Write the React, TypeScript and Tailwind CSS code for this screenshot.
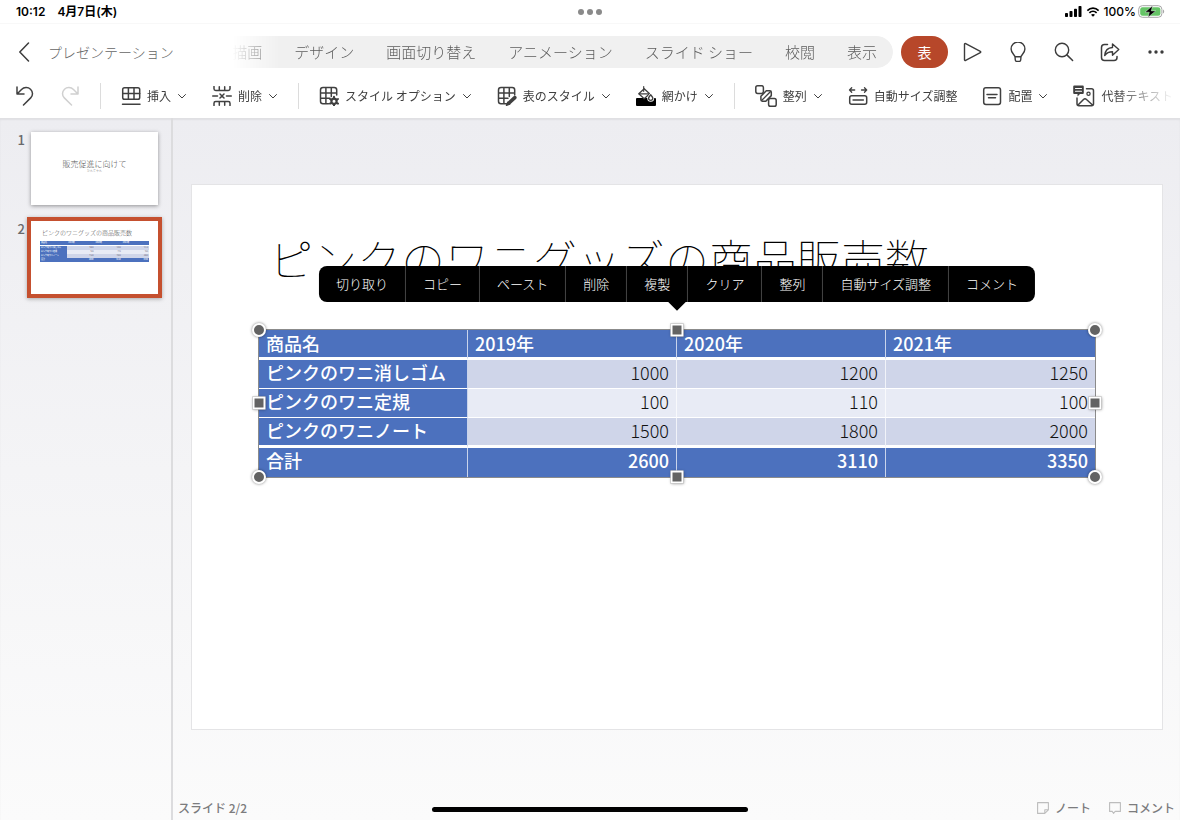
import React from 'react';
import clsx from 'clsx';

const tabs = ['描画', 'デザイン', '画面切り替え', 'アニメーション', 'スライド ショー', '校閲', '表示'];

const menuItems = ['切り取り', 'コピー', 'ペースト', '削除', '複製', 'クリア', '整列', '自動サイズ調整', 'コメント'];

const columns = ['商品名', '2019年', '2020年', '2021年'];

const products = [
  { name: 'ピンクのワニ消しゴム', sales: [1000, 1200, 1250] },
  { name: 'ピンクのワニ定規', sales: [100, 110, 100] },
  { name: 'ピンクのワニノート', sales: [1500, 1800, 2000] },
];

const totals = [2600, 3110, 3350];

const slideTitle = 'ピンクのワニグッズの商品販売数';

interface IconProps {
  children: React.ReactNode;
  className?: string;
  box?: string;
}

const Icon = ({ children, className = 'size-5', box = '0 0 20 20' }: IconProps) => (
  <svg
    viewBox={box}
    className={clsx('shrink-0', className)}
    fill="none"
    stroke="currentColor"
    strokeWidth="1.5"
    strokeLinecap="round"
    strokeLinejoin="round"
    aria-hidden="true"
  >
    {children}
  </svg>
);

const Chevron = () => (
  <Icon className="size-2.5" box="0 0 10 10">
    <path d="M1.5 3.5 5 7l3.500-3.500" strokeWidth="1" />
  </Icon>
);

const UndoIcon = () => (
  <Icon>
    <path d="M2 1v7h7M2.300 7.700 6.500 3.500C9 1 13 .8 15.500 3.200c2.600 2.500 2.600 6.300.2 8.700L8.500 19" />
  </Icon>
);

const RedoIcon = () => (
  <Icon>
    <path d="M18 1v7h-7M17.700 7.700 13.500 3.500C11 1 7 .8 4.500 3.200 1.900 5.700 1.900 9.500 4.300 11.900L11.500 19" />
  </Icon>
);

const InsertIcon = () => (
  <Icon>
    <rect x="1.700" y="1.700" width="17" height="11.500" rx="1.800" />
    <path d="M1.700 7.500h17M7.400 1.700v11.500M13 1.700v11.500M1.500 18.200h17.500" />
  </Icon>
);

const DeleteIcon = () => (
  <Icon>
    <path d="M2 .5v2.300c0 1 .7 1.700 1.700 1.700h12.600c1 0 1.700-.7 1.700-1.700V.5M7.300.8v3.700M12.700.8v3.700" />
    <path d="M2 19.500v-2.300c0-1 .7-1.700 1.700-1.700h12.600c1 0 1.700.7 1.700 1.700v2.300M7.300 19.200v-3.700M12.700 19.200v-3.700" />
    <path d="M.7 10h4.800M14.500 10h4.800M8 8l4 4M12 8l-4 4" />
  </Icon>
);

const GridShape = () => (
  <path d="M9.500 17.700h-5.500c-1.500 0-2.500-1-2.500-2.500V4c0-1.500 1-2.500 2.500-2.500h11.200c1.500 0 2.500 1 2.500 2.500v5M1.500 6.900h16.200M1.500 12.300h9.500M6.900 1.500v16.200M12.300 1.500v9" />
);

const StyleOptionsIcon = () => (
  <Icon>
    <GridShape />
    <circle cx="15" cy="15.300" r="2.600" strokeWidth="2.200" />
    <path d="M15 10.800v1M15 18.800v1M11 13l1 .6M18 17l1 .6M11 17.600l1-.6M18 13.600l1-.6" strokeWidth="2" />
  </Icon>
);

const TableStyleIcon = () => (
  <Icon>
    <GridShape />
    <path d="m12 17 5.800-5.400" strokeWidth="3.600" />
    <path d="m9.500 19.300 1.300-3 1.800 1.800z" fill="currentColor" />
  </Icon>
);

const ShadingIcon = () => (
  <Icon>
    <rect x="0" y="12" width="20" height="8" rx="1" fill="#000" stroke="none" />
    <path d="M2.800 7.800 8.200 2.800l5.400 5-5.400 5z" fill="#fff" strokeWidth="1.300" />
    <path d="M3.200 7.800h9.800M7.700 5.300V.6" strokeWidth="1.200" />
    <path d="M14.700 8.800c1.400 1.600 2.100 2.500 2.100 3.500a2.100 2.100 0 0 1-4.200 0c0-1 .7-1.900 2.100-3.500z" fill="#fff" stroke="#fff" strokeWidth="2.800" />
    <path d="M14.700 8.800c1.400 1.600 2.100 2.500 2.100 3.500a2.100 2.100 0 0 1-4.200 0c0-1 .7-1.900 2.100-3.500z" fill="#fff" strokeWidth="1.300" />
  </Icon>
);

const AlignIcon = () => (
  <Icon className="size-[22px]" box="0 0 22 22">
    <rect x=".8" y=".8" width="7.600" height="7.600" rx="1.800" />
    <rect x="13.600" y="13.600" width="7.600" height="7.600" rx="1.800" />
    <path d="M11.300 5.800h3.600c.8 0 1.400.6 1.400 1.400v3.400l-5.500 5.600H7.300c-.8 0-1.400-.6-1.400-1.400v-3.500z" strokeWidth="1.500" />
    <path d="m6.800 15.300 8.500-8.500" strokeWidth="1.300" />
  </Icon>
);

const AutoSizeIcon = () => (
  <Icon>
    <rect x="1.700" y="9.700" width="17" height="8.600" rx="2" />
    <path d="M5 14h10.400M1.500 4h5.200M3.700 1.800 1.500 4l2.200 2.200M13.500 4h5.200M16.500 1.800 18.700 4l-2.200 2.200" strokeWidth="1.300" />
  </Icon>
);

const ArrangeIcon = () => (
  <Icon>
    <rect x="1.700" y="1.700" width="16.800" height="16.800" rx="2.200" />
    <path d="M5 8.600h10M6.500 11.800h7" />
  </Icon>
);

const AltTextIcon = () => (
  <Icon className="size-[22px]" box="0 0 22 22">
    <path d="M13.500 3.700h5c1.200 0 2 .8 2 2v13c0 1.200-.8 2-2 2H6c-1.200 0-2-.8-2-2V13M5 20l5.500-5.500c1-1 2-1 3 0L19.500 20" />
    <circle cx="15.500" cy="8.700" r="1.600" strokeWidth="1.300" />
    <path d="M1.500.5h8c.8 0 1.300.5 1.300 1.300v5.900c0 .8-.5 1.300-1.300 1.300H7l-2.500 2.500V9h-3C.7 9 .2 8.500.2 7.700V1.800C.2 1 .7.5 1.500.5z" fill="currentColor" stroke="none" />
    <path d="M2.500 3.500h6M2.500 6.200h6" stroke="#fff" strokeWidth="1.100" />
  </Icon>
);

const Separator = () => <div className="mx-[-5px] h-[26px] w-px shrink-0 bg-[#dcdcdc]" />;

interface ToolProps {
  icon: React.ReactNode;
  label: string;
  menu?: boolean;
}

const Tool = ({ icon, label, menu = true }: ToolProps) => (
  <button type="button" className="flex shrink-0 items-center gap-1.5">
    {icon}
    <span>{label}</span>
    {menu && <Chevron />}
  </button>
);

const StatusBar = () => (
  <div className="relative flex h-6 shrink-0 items-center justify-between border-b border-[#f8f8f8] pr-[15px] pl-4 text-xs font-medium text-black">
    <div className="flex gap-3 font-[Inter,'Noto_Sans_CJK_JP',sans-serif] font-semibold">
      <span>10:12</span>
      <span>4月7日(木)</span>
    </div>
    <div className="absolute inset-x-0 flex justify-center gap-[3px]">
      <span className="size-[6px] rounded-full bg-[#8a8a8a]" />
      <span className="size-[6px] rounded-full bg-[#8a8a8a]" />
      <span className="size-[6px] rounded-full bg-[#8a8a8a]" />
    </div>
    <div className="flex items-center gap-1 font-[Inter,sans-serif]">
      <svg viewBox="0 0 17 11" className="h-[11px] w-[17px]" aria-hidden="true">
        <rect x="0" y="7" width="3" height="4" rx=".8" />
        <rect x="4.500" y="5" width="3" height="6" rx=".8" />
        <rect x="9" y="2.700" width="3" height="8.300" rx=".8" />
        <rect x="13.500" y="0" width="3" height="11" rx=".8" />
      </svg>
      <svg viewBox="0 0 14 11" className="h-[10px] w-[14px]" aria-hidden="true">
        <g fill="none" stroke="#000" strokeWidth="1.900">
          <path d="M.8 3.900c3.600-3.400 8.800-3.400 12.400 0" />
          <path d="M3 6.500c2.300-2.200 5.700-2.200 8 0" />
        </g>
        <path d="m7 10.800 2.200-2.300c-1.300-1.100-3.100-1.100-4.400 0z" />
      </svg>
      <span>100%</span>
      <svg viewBox="0 0 27 13" className="-ml-0.5 h-[13px] w-[27px]" aria-hidden="true">
        <rect x=".7" y=".7" width="23.200" height="11.600" rx="3.600" fill="#fff" stroke="#a6a6a6" />
        <rect x="2.200" y="2.200" width="20.200" height="8.600" rx="2.200" fill="#65c466" />
        <path d="M25 4.500c1.600.6 1.600 3.400 0 4z" fill="#a6a6a6" />
        <path d="M14.500.8 7 7.200h4.300l-1.200 5L17.700 5.900h-4.400z" stroke="#fff" strokeWidth=".4" />
      </svg>
    </div>
  </div>
);

const Ribbon = () => (
  <div className="flex h-14 shrink-0 items-center px-3.5 text-[#3c3c3c]">
    <button type="button" aria-label="戻る">
      <Icon>
        <path d="M14.500 1 5.800 10l8.700 9" />
      </Icon>
    </button>
    <span className="ml-3.5 shrink-0 text-sm font-light text-[#666]">プレゼンテーション</span>
    <nav className="ml-auto flex h-8 shrink-0 items-center gap-8 rounded-r-full bg-[#f0f0f0] pr-4 text-[15px] font-light text-[#5c5c5c] [mask-image:linear-gradient(to_right,transparent,black_48px)]">
      {tabs.map((tab) => (
        <button type="button" key={tab} className="shrink-0">{tab}</button>
      ))}
    </nav>
    <button type="button" className="mr-3.5 ml-2 h-8 w-[47px] shrink-0 rounded-full bg-[#b7472a] text-sm text-white">表</button>
    <div className="flex shrink-0 gap-[26px]">
      <button type="button" aria-label="再生">
        <Icon><path d="M2.500 2.300v15.400c0 .7.600 1 1.200.7l14.600-7.700c.6-.3.600-1.100 0-1.400L3.700 1.600c-.6-.3-1.200 0-1.200.7z" strokeWidth="1.400" /></Icon>
      </button>
      <button type="button" aria-label="ヒント">
        <Icon>
          <path d="M7 14.700c-.2-2-3.900-3.400-3.900-7.800a6.900 6.900 0 0 1 13.800 0c0 4.400-3.700 5.800-3.900 7.800zM7 14.700l.3 3.300c.1.900.6 1.400 1.400 1.400h2.600c.8 0 1.300-.5 1.400-1.400l.3-3.300" strokeWidth="1.400" />
        </Icon>
      </button>
      <button type="button" aria-label="検索">
        <Icon>
          <circle cx="8" cy="8" r="6.700" strokeWidth="1.400" />
          <path d="m12.900 12.900 5.700 5.600" />
        </Icon>
      </button>
      <button type="button" aria-label="共有">
        <Icon>
          <path d="M7.500 2.500h-3c-1.700 0-3 1.300-3 3v10c0 1.700 1.300 3 3 3h9.500c1.700 0 3-1.300 3-3v-1" />
          <path d="M12.500 2v3.500C8 5.700 5.200 8 4.700 13.500c2-2.700 4.500-3.700 7.800-3.700v3.500l6.300-5.700z" strokeWidth="1.400" />
        </Icon>
      </button>
      <button type="button" aria-label="その他">
        <Icon>
          <g fill="currentColor" stroke="none">
            <circle cx="4" cy="10" r="1.700" />
            <circle cx="10" cy="10" r="1.700" />
            <circle cx="16" cy="10" r="1.700" />
          </g>
        </Icon>
      </button>
    </div>
  </div>
);

const Toolbar = () => (
  <div className="mr-1.5 flex h-[38px] shrink-0 items-center gap-[25px] overflow-hidden pb-1.5 pl-[15px] text-xs whitespace-nowrap text-[#404040] [mask-image:linear-gradient(to_left,transparent,black_60px)]">
    <button type="button" aria-label="元に戻す"><UndoIcon /></button>
    <button type="button" aria-label="やり直し" className="text-[#d0d0d0]"><RedoIcon /></button>
    <Separator />
    <Tool icon={<InsertIcon />} label="挿入" />
    <Tool icon={<DeleteIcon />} label="削除" />
    <Separator />
    <Tool icon={<StyleOptionsIcon />} label="スタイル オプション" />
    <Tool icon={<TableStyleIcon />} label="表のスタイル" />
    <Tool icon={<ShadingIcon />} label="網かけ" />
    <Separator />
    <Tool icon={<AlignIcon />} label="整列" />
    <Tool icon={<AutoSizeIcon />} label="自動サイズ調整" menu={false} />
    <Tool icon={<ArrangeIcon />} label="配置" />
    <Tool icon={<AltTextIcon />} label="代替テキスト" menu={false} />
  </div>
);

// small = thumbnail version of the same table
const SalesTable = ({ small = false }: { small?: boolean }) => {
  const cell = small ? 'h-1 p-0 px-px' : 'px-[7px] py-0 align-top';
  const side = small ? '' : 'border-r border-r-white/70 last:border-r-0';
  return (
    <table
      className={clsx(
        'w-full table-fixed border-separate border-spacing-0 text-left',
        small ? 'text-[2px] leading-[4px]' : 'text-lg leading-6'
      )}
    >
      <thead className={small ? '' : 'leading-[26px]'}>
        <tr className={clsx('bg-[#4c71be] text-white', !small && 'h-[30px]')}>
          {columns.map((col) => (
            <th key={col} className={clsx(cell, side, 'border-b-white font-medium', small ? 'border-b' : 'border-b-3')}>{col}</th>
          ))}
        </tr>
      </thead>
      <tbody>
        {products.map((row, i) => {
          const last = i === products.length - 1;
          const line = small ? '' : last ? 'border-b-3 border-b-white' : 'border-b border-b-white';
          return (
            <tr key={row.name} className={clsx(!small && (last ? 'h-[30px]' : 'h-[29px]'), i % 2 ? 'bg-[#e8ebf5]' : 'bg-[#cfd5e9]')}>
              <th className={clsx(cell, side, line, 'bg-[#4c71be] font-medium whitespace-nowrap text-white')}>{row.name}</th>
              {row.sales.map((n, j) => (
                <td key={j} className={clsx(cell, side, line, 'text-right font-light text-[#111]')}>{n}</td>
              ))}
            </tr>
          );
        })}
      </tbody>
      <tfoot>
        <tr className={clsx('bg-[#4c71be] text-white', !small && 'h-[29px]')}>
          <th className={clsx(cell, side, 'font-medium')}>合計</th>
          {totals.map((n) => (
            <td key={n} className={clsx(cell, side, 'text-right font-medium')}>{n}</td>
          ))}
        </tr>
      </tfoot>
    </table>
  );
};

const Sidebar = () => (
  <aside className="flex w-[173px] shrink-0 flex-col gap-2 border-r-2 border-[#dcdcde] pt-2.5 pl-4 text-[13px] font-medium text-[#6a6a6c]">
    <button type="button" className="flex items-start">
      <span className="mr-0.5 w-[9px] pt-0.5 text-right">1</span>
      <span className="m-1 flex h-[73px] w-[127px] flex-col items-center justify-center bg-white pb-1 font-light shadow-[0_1px_4px_rgba(0,0,0,0.4)]">
        <span className="text-[8px] leading-[10px] text-[#555]">販売促進に向けて</span>
        <span className="text-[3px] leading-[5px]">かんちゃん</span>
      </span>
    </button>
    <button type="button" className="flex items-start">
      <span className="mr-0.5 w-[9px] pt-0.5 text-right">2</span>
      <span className="border-4 border-[#c5502f] shadow-[0_1px_4px_rgba(0,0,0,0.3)]">
        <span className="block h-[73px] w-[127px] bg-white px-[9px] pt-2">
          <span className="mb-1 block pl-0.5 text-left text-[6px] leading-[8px] font-light whitespace-nowrap text-[#555]">{slideTitle}</span>
          <SalesTable small />
        </span>
      </span>
    </button>
  </aside>
);

const handles = [
  'left-0 top-0 size-3.5 rounded-full',
  'left-full top-0 size-3.5 rounded-full',
  'left-0 top-full size-3.5 rounded-full',
  'left-full top-full size-3.5 rounded-full',
  'left-1/2 top-0 size-[13px]',
  'left-1/2 top-full size-[13px]',
  'left-0 top-1/2 size-[13px]',
  'left-full top-1/2 size-[13px]',
];

const ContextMenu = () => (
  <div className="absolute bottom-full left-1/2 mb-7 flex h-9 -translate-x-1/2 rounded-lg bg-black text-[13px] font-light text-white">
    {menuItems.map((item, i) => (
      <button
        type="button"
        key={item}
        className={clsx('px-[17px] whitespace-nowrap', i < menuItems.length - 1 && 'border-r border-[#444]')}
      >
        {item}
      </button>
    ))}
    <span className="absolute top-full left-1/2 h-[9px] w-[18px] -translate-x-1/2 bg-black [clip-path:polygon(0_0,100%_0,50%_100%)]" />
  </div>
);

const Slide = () => (
  <div className="aspect-video w-full border border-[#e4e4e6] bg-white px-[67px]">
    <h1 className="h-[145px] pt-[43px] pl-2.5 text-[44px] leading-[60px] font-thin whitespace-nowrap text-black">{slideTitle}</h1>
    <div className="relative outline outline-[#8b8b8b]">
      <SalesTable />
      {handles.map((pos) => (
        <span key={pos} className={clsx('absolute -translate-1/2 border-2 border-white bg-[#636363] shadow-[0_0_3px_rgba(0,0,0,0.5)]', pos)} />
      ))}
      <ContextMenu />
    </div>
  </div>
);

const Footer = () => (
  <footer className="flex h-6 shrink-0 items-center gap-[18px] px-[5px] text-xs font-medium text-[#7c7c7e]">
    <span className="mr-auto">スライド 2/2</span>
    <button type="button" className="flex items-center gap-1.5">
      <Icon className="size-3 text-[#bdbdbd]" box="0 0 12 12">
        <path d="M.6.6h10.800v7.200l-3.600 3.600H.6zM7.800 11v-3.200h3.400" strokeWidth="1.100" />
      </Icon>
      <span>ノート</span>
    </button>
    <button type="button" className="flex items-center gap-1.5">
      <Icon className="size-3 text-[#bdbdbd]" box="0 0 12 12">
        <path d="M.6.6h10.800v8.800H6.200L4.500 11.300 3.200 9.400H.6z" strokeWidth="1.100" />
      </Icon>
      <span>コメント</span>
    </button>
  </footer>
);

export default function App() {
  return (
    <div lang="ja" className="relative flex h-screen flex-col overflow-hidden bg-white font-['Noto_Sans_CJK_JP',sans-serif]">
      <StatusBar />
      <Ribbon />
      <Toolbar />
      <div className="flex min-h-0 flex-1 bg-linear-to-b from-[#ededf1] to-[#fbfbfb] shadow-[inset_0_2px_2px_rgba(0,0,0,0.06)]">
        <Sidebar />
        <main className="flex min-w-0 flex-1 flex-col">
          <div className="flex flex-1 items-center pr-[17px] pl-[18px]">
            <Slide />
          </div>
          <Footer />
        </main>
      </div>
      <div className="absolute bottom-2 left-1/2 h-[5px] w-[316px] -translate-x-1/2 rounded-full bg-black" />
    </div>
  );
}
